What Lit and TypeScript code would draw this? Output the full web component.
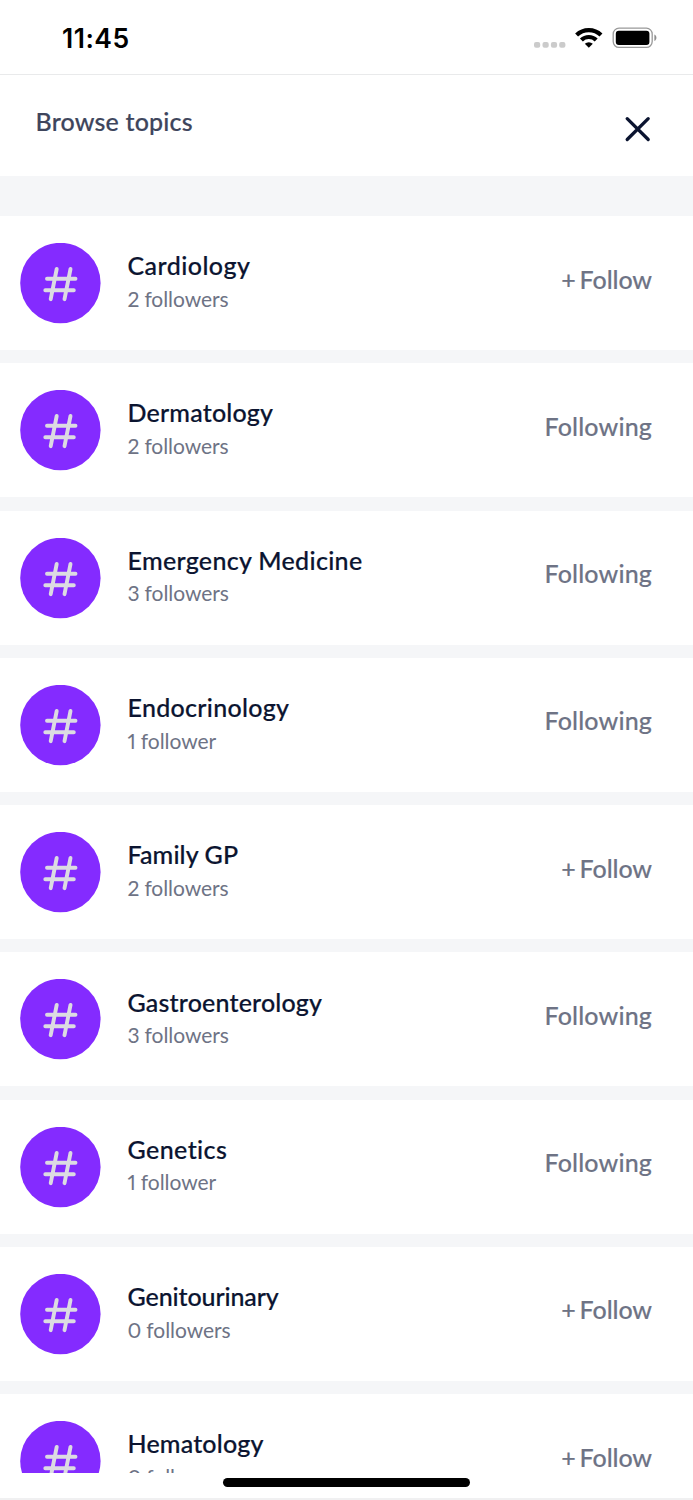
import { LitElement, html, css } from "lit";
import { customElement, property } from "lit/decorators.js";
import { styleMap } from "lit/directives/style-map.js";

interface Topic {
  name: string;
  followers: number;
  following: boolean;
  tracking: number;
}

const TOPICS: Topic[] = [
  { name: "Cardiology", followers: 2, following: false, tracking: 0.45 },
  { name: "Dermatology", followers: 2, following: true, tracking: 0.2 },
  { name: "Emergency Medicine", followers: 3, following: true, tracking: 0.32 },
  { name: "Endocrinology", followers: 1, following: true, tracking: 0.3 },
  { name: "Family GP", followers: 2, following: false, tracking: 0.12 },
  { name: "Gastroenterology", followers: 3, following: true, tracking: 0.18 },
  { name: "Genetics", followers: 1, following: true, tracking: 0.42 },
  { name: "Genitourinary", followers: 0, following: false, tracking: -0.1 },
  { name: "Hematology", followers: 0, following: false, tracking: 0.18 },
];

@customElement("status-bar")
class StatusBar extends LitElement {
  static styles = css`
    :host {
      display: flex;
      justify-content: space-between;
      height: 75px;
      box-sizing: border-box;
      padding: 22px 35px 0 62px;
      border-bottom: 1px solid #e9eaeb;
      font: 600 26.5px/32px Inter, sans-serif;
      letter-spacing: 0.5px;
      color: #000;
    }
    svg {
      display: block;
    }
  `;
  render() {
    return html`
      <span class="time">11:45</span>
      <svg width="125" height="32" viewBox="533 22 125 32">
        <g fill="#cbcbcb">
          <rect x="534" y="42" width="6.2" height="5.8" rx="2" />
          <rect x="542.5" y="42" width="6.2" height="5.8" rx="2" />
          <rect x="550.9" y="42" width="6.2" height="5.8" rx="2" />
          <rect x="559.2" y="42" width="6.2" height="5.8" rx="2" />
        </g>
        <g fill="none" stroke="#000" stroke-width="4.2">
          <path d="M576.6 35a17.6 17.6 0 0 1 24.4 0" />
          <path d="M581.4 40a10.6 10.6 0 0 1 14.8 0" />
        </g>
        <path d="M588.8 47.8l-4-4a5.8 5.8 0 0 1 8 0z" />
        <rect x="613.2" y="28.2" width="39" height="19.2" rx="5.8" fill="none" stroke="#999" stroke-width="1.3" />
        <rect x="615.8" y="30.8" width="33.6" height="14.2" rx="3" />
        <path d="M654.4 34.6c2.7 1.3 2.7 5.2 0 6.5z" fill="#8e8e8e" />
      </svg>
    `;
  }
}

@customElement("topic-row")
class TopicRow extends LitElement {
  @property({ attribute: false }) topic!: Topic;
  static styles = css`
    :host {
      display: flex;
      align-items: flex-start;
      flex: none;
      height: 134px;
      box-sizing: border-box;
      padding: 27px 41px 0 20px;
      background: #fff;
    }
    .badge {
      flex: none;
      display: block;
      margin-right: 26.5px;
    }
    .text {
      flex: 1;
      padding-top: 6.2px;
      white-space: nowrap;
    }
    .name {
      font-size: 25px;
      line-height: 32px;
      font-weight: 500;
      color: #0b1430;
      -webkit-text-stroke: 0.2px #0b1430;
    }
    .count {
      font-size: 21px;
      line-height: 26px;
      margin-top: 4.6px;
      letter-spacing: -0.05px;
      word-spacing: -0.3px;
      font-variant-numeric: proportional-nums;
      color: #6e7385;
    }
    .action {
      padding-top: 19.5px;
      font-size: 25px;
      line-height: 32px;
      font-weight: 500;
      letter-spacing: 0.15px;
      color: #6e7385;
      -webkit-text-stroke: 0.15px #6e7385;
    }
    .follow {
      letter-spacing: -0.1px;
      word-spacing: -2.2px;
    }
  `;
  render() {
    const { name, followers, following, tracking } = this.topic;
    return html`
      <svg class="badge" width="81" height="81" viewBox="0 0 81 81">
        <circle cx="40.4" cy="40" r="40.2" fill="#842bff" />
        <path
          d="M57 25.8l-6 30.2M70.8 25.8l-6 30.2M47.3 35.6h28.5M45.6 47h28.5"
          transform="translate(-20.3 .2)"
          fill="none"
          stroke="#dcdbe2"
          stroke-width="3.9"
          stroke-linecap="round"
        />
      </svg>
      <div class="text">
        <div class="name" style=${styleMap({ letterSpacing: `${tracking}px` })}>${name}</div>
        <div class="count">${followers} ${followers === 1 ? "follower" : "followers"}</div>
      </div>
      ${following ? html`<div class="action">Following</div>` : html`<div class="action follow">+ Follow</div>`}
    `;
  }
}

@customElement("app-root")
class AppRoot extends LitElement {
  static styles = css`
    :host {
      display: flex;
      flex-direction: column;
      height: 1500px;
      overflow: hidden;
      background: #fff;
      font-family: Lato, sans-serif;
      font-variant-ligatures: none;
    }
    status-bar,
    .header,
    .footer {
      flex: none;
    }
    .header {
      display: flex;
      justify-content: space-between;
      height: 101px;
      box-sizing: border-box;
      padding: 30.2px 41px 0 35.5px;
    }
    .title {
      font-size: 25px;
      line-height: 32px;
      font-weight: 500;
      letter-spacing: 0.18px;
      color: #3e455c;
      -webkit-text-stroke: 0.2px #3e455c;
    }
    .close {
      margin-top: 9.8px;
    }
    .list {
      flex: 1;
      min-height: 0;
      overflow: hidden;
      display: flex;
      flex-direction: column;
      gap: 13.28px;
      padding-top: 40px;
      background: #f5f6f8;
    }
    .footer {
      display: flex;
      justify-content: center;
      height: 27px;
      box-sizing: border-box;
      padding-top: 5px;
      border-bottom: 2px solid #f0f0f1;
    }
    .home {
      width: 247.4px;
      height: 8.5px;
      border-radius: 5px;
      background: #000;
    }
  `;
  render() {
    return html`
      <status-bar></status-bar>
      <div class="header">
        <span class="title">Browse topics</span>
        <svg class="close" width="29" height="28" viewBox="623 115 29 28">
          <path d="M627.2 118.7l21 20.8M648.2 118.7l-21 20.8" stroke="#0b1430" stroke-width="3.3" stroke-linecap="round" />
        </svg>
      </div>
      <div class="list">${TOPICS.map((t) => html`<topic-row .topic=${t}></topic-row>`)}</div>
      <div class="footer"><div class="home"></div></div>
    `;
  }
}
